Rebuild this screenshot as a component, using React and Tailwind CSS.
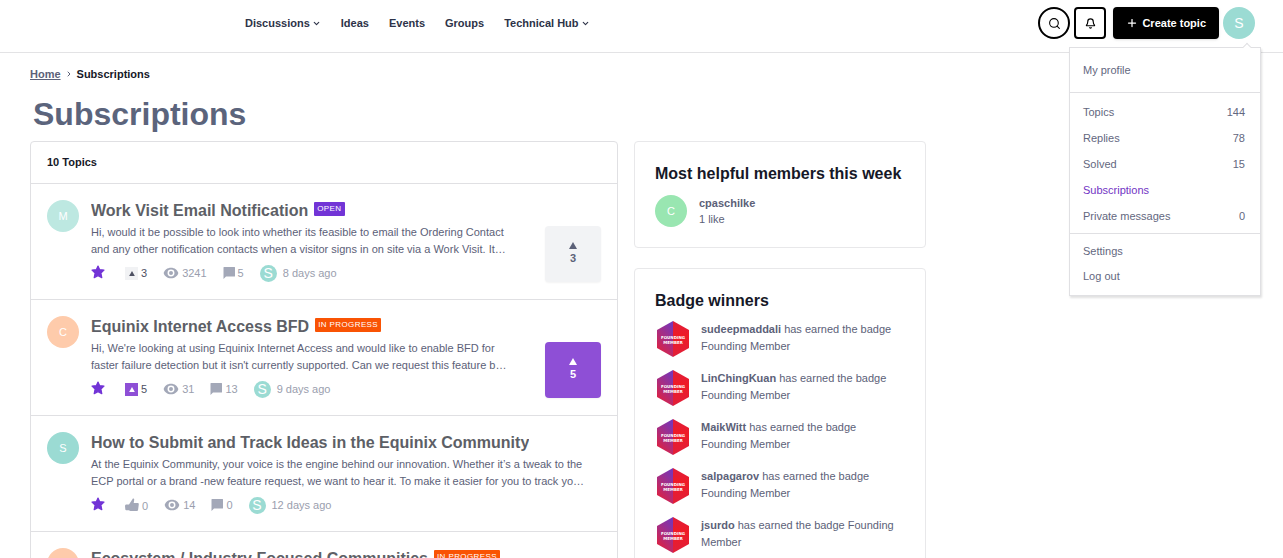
import { useState } from 'react';
import { ChevronDown, ChevronRight, Plus, Search, Bell } from 'lucide-react';

const navItems = [
  { label: 'Discussions', menu: true },
  { label: 'Ideas' },
  { label: 'Events' },
  { label: 'Groups' },
  { label: 'Technical Hub', menu: true },
];

const menuStats = [
  { label: 'Topics', count: 144 },
  { label: 'Replies', count: 78 },
  { label: 'Solved', count: 15 },
  { label: 'Subscriptions', active: true },
  { label: 'Private messages', count: 0 },
];

const topics = [
  {
    initial: 'M',
    avatar: 'bg-[#bde8e1]',
    title: 'Work Visit Email Notification',
    status: 'OPEN',
    statusColor: 'bg-[#7234d6]',
    lines: [
      'Hi, would it be possible to look into whether its feasible to email the Ordering Contact',
      'and any other notification contacts when a visitor signs in on site via a Work Visit. It…',
    ],
    votes: 3,
    views: 3241,
    replies: 5,
    age: '8 days ago',
  },
  {
    initial: 'C',
    avatar: 'bg-[#fecbab]',
    title: 'Equinix Internet Access BFD',
    status: 'IN PROGRESS',
    statusColor: 'bg-[#f95304]',
    lines: [
      "Hi, We're looking at using Equinix Internet Access and would like to enable BFD for",
      "faster failure detection but it isn't currently supported. Can we request this feature b…",
    ],
    votes: 5,
    voted: true,
    views: 31,
    replies: 13,
    age: '9 days ago',
  },
  {
    initial: 'S',
    avatar: 'bg-[#9bdbd3]',
    title: 'How to Submit and Track Ideas in the Equinix Community',
    lines: [
      'At the Equinix Community, your voice is the engine behind our innovation. Whether it’s a tweak to the',
      'ECP portal or a brand -new feature request, we want to hear it. To make it easier for you to track yo…',
    ],
    likes: 0,
    views: 14,
    replies: 0,
    age: '12 days ago',
  },
  {
    initial: 'C',
    avatar: 'bg-[#fecbab]',
    title: 'Ecosystem / Industry Focused Communities',
    status: 'IN PROGRESS',
    statusColor: 'bg-[#f95304]',
    lines: [],
  },
];

const winners = ['sudeepmaddali', 'LinChingKuan', 'MaikWitt', 'salpagarov', 'jsurdo'];

const Triangle = ({ className }) => (
  <svg viewBox="0 0 8 7" className={className} fill="currentColor" aria-hidden="true">
    <path d="M4 0l4 7H0z" />
  </svg>
);

const StarIcon = () => (
  <svg viewBox="0 0 14 14" className="size-3.5" fill="#7234d6" stroke="#7234d6" strokeWidth="1.2" strokeLinejoin="round" aria-hidden="true">
    <path d="M7 1l1.700 3.700 4.300.400-3.100 2.900.900 4.600L7 10.600l-3.800 2 .9-4.600L1 5.100l4.300-.4z" />
  </svg>
);

const EyeIcon = () => (
  <svg viewBox="0 0 24 24" className="h-4 w-4" fill="#a3a8b8" aria-hidden="true">
    <path d="M12 4C6.500 4 2.200 7.200 1 12c1.200 4.800 5.500 8 11 8s9.800-3.200 11-8c-1.200-4.800-5.500-8-11-8zm0 13.200a5.200 5.200 0 110-10.400 5.200 5.200 0 010 10.400zm0-2.200a3 3 0 100-6 3 3 0 000 6z" />
  </svg>
);

const CommentIcon = () => (
  <svg viewBox="0 0 12 12" className="size-3" fill="#a3a8b8" aria-hidden="true">
    <path d="M1 0h10.500a.5.5 0 01.5.500v8.500a.5.5 0 01-.5.500H3L.5 12V.5A.5.500 0 011 0z" />
  </svg>
);

const ThumbIcon = () => (
  <svg viewBox="0 0 14 14" className="size-3.5" fill="#a3a8b8" aria-hidden="true">
    <path d="M1.500 6.500H4L7.600.900C8 .2 9.300.500 9.200 1.700L8.700 5H12.500c.9 0 1.400.6 1.300 1.300l-.7 5.400c-.1.800-.7 1.300-1.500 1.300H5.500c-.6 0-1-.3-1.500-.7H1.500c-.6 0-1.100-.4-1.200-1L0 8c0-.9.600-1.500 1.500-1.500z" />
  </svg>
);

const FoundingBadge = () => (
  <svg viewBox="0 0 32 36" className="h-9 w-8 shrink-0 font-['DejaVu_Sans',sans-serif]" role="img" aria-label="Founding Member badge">
    <defs>
      <linearGradient id="badgeLeft" x1="0.7" y1="0" x2="0.2" y2="1">
        <stop offset="0" stopColor="#7a35b4" />
        <stop offset="0.45" stopColor="#a82d82" />
        <stop offset="1" stopColor="#e81f35" />
      </linearGradient>
      <linearGradient id="badgeRight" x1="0" y1="0" x2="0" y2="1">
        <stop offset="0" stopColor="#de1d3c" />
        <stop offset="0.4" stopColor="#ef1b26" />
        <stop offset="1" stopColor="#e01f3a" />
      </linearGradient>
    </defs>
    <path d="M16 0L0 9v18l16 9z" fill="url(#badgeLeft)" />
    <path d="M16 0l16 9v18l-16 9z" fill="url(#badgeRight)" />
    <text x="16" y="18" fill="#fff" fontSize="4" fontWeight="700" textAnchor="middle">FOUNDING</text>
    <text x="16" y="23" fill="#fff" fontSize="4" fontWeight="700" textAnchor="middle">MEMBER</text>
  </svg>
);

const Header = () => {
  const [open, setOpen] = useState(true);

  return (
    <header className="flex h-[53px] items-start justify-between border-b border-[#e3e3e5] pt-[7px] pr-7 pl-[245px]">
      <nav className="flex h-8 items-center gap-5 text-[11px] font-bold text-[#2d3348]">
        {navItems.map((item) =>
          item.menu ? (
            <button key={item.label} type="button" className="flex items-center gap-0.5 pt-px">
              {item.label}
              <ChevronDown className="size-[9px]" strokeWidth={3} />
            </button>
          ) : (
            <a key={item.label} href="#">{item.label}</a>
          )
        )}
      </nav>

      <div className="flex items-center gap-1">
        <button type="button" aria-label="Search" className="flex size-8 items-center justify-center rounded-full border-2 border-black">
          <Search className="size-[13px]" strokeWidth={2} />
        </button>
        <button type="button" aria-label="Notifications" className="flex size-8 items-center justify-center rounded border-2 border-black">
          <Bell className="size-[11px]" strokeWidth={2.5} />
        </button>
        <button type="button" className="ml-[3px] flex h-8 items-center gap-1 rounded bg-black px-[13px] text-[11px] font-bold text-white shadow-sm">
          <Plus className="size-3" strokeWidth={2.5} />
          Create topic
        </button>
        <div className="relative">
          <button
            type="button"
            aria-label="Account menu"
            onClick={() => setOpen(!open)}
            className="flex size-8 items-center justify-center rounded-full bg-[#9bdbd3] text-sm text-white"
          >
            S
          </button>
          {open && <AccountMenu />}
        </div>
      </div>
    </header>
  );
};

const AccountMenu = () => (
  <div className="absolute top-10 -right-1.5 z-10 w-48 border border-[#e0e0e3] bg-white text-[11px] leading-4 text-[#636780] shadow-[1px_2px_2px_rgba(0,0,0,0.12)]">
    <span className="absolute -top-1 right-2.5 size-1.5 rotate-45 border-t border-l border-[#e0e0e3] bg-white" />
    <a href="#" className="block border-b border-[#e0e0e3] px-[13px] py-3.5">My profile</a>
    <ul className="space-y-2.5 border-b border-[#e0e0e3] px-[13px] pt-[11px] pb-[9px]">
      {menuStats.map((item) => (
        <li key={item.label}>
          <a href="#" className={`flex justify-between pr-0.5 ${item.active ? 'text-[#7234c4]' : ''}`}>
            <span>{item.label}</span>
            <span>{item.count}</span>
          </a>
        </li>
      ))}
    </ul>
    <div className="space-y-[9px] px-[13px] pt-[9px] pb-[11px]">
      <a href="#" className="block">Settings</a>
      <a href="#" className="block">Log out</a>
    </div>
  </div>
);

const TopicMeta = ({ topic }) => (
  <div className="mt-1.5 flex h-[18px] items-center text-[11px] text-[#9a9eae]">
    <button type="button" aria-label="Unsubscribe" className="mr-5 pb-0.5">
      <StarIcon />
    </button>
    {topic.votes !== undefined ? (
      <span className="flex items-center gap-[3px] text-[#4d5062]">
        <span className={`flex size-[13px] items-center justify-center ${topic.voted ? 'bg-[#8e4fd6] text-white' : 'bg-[#f1f2f4] text-[#4d5062]'}`}>
          <Triangle className="h-[5px] w-1.5" />
        </span>
        {topic.votes}
      </span>
    ) : (
      <span className="flex items-center gap-[3px]">
        <ThumbIcon />
        <span className="pt-0.5">{topic.likes}</span>
      </span>
    )}
    <span className="ml-4 flex items-center gap-[3px]">
      <EyeIcon />
      {topic.views}
    </span>
    <span className="ml-4 flex items-center gap-[3px]">
      <CommentIcon />
      {topic.replies}
    </span>
    <span className="ml-4 flex size-[17px] items-center justify-center rounded-full bg-[#9bdbd3] text-sm text-white">S</span>
    <span className="ml-1.5">{topic.age}</span>
  </div>
);

const TopicRow = ({ topic }) => (
  <li className="flex min-h-[116px] gap-3 border-t border-[#e0e0e3] px-4 pt-4">
    <span className={`flex size-8 shrink-0 items-center justify-center rounded-full text-[11px] text-white ${topic.avatar}`}>
      {topic.initial}
    </span>
    <div className="min-w-0 flex-1">
      <div className="flex h-[22px] items-center gap-1.5">
        <h3 className="truncate text-base leading-5 font-bold text-[#5d5f66]">
          <a href="#">{topic.title}</a>
        </h3>
        {topic.status && (
          <span className={`mb-1 shrink-0 rounded-[1px] px-[3px] text-[8px] leading-[14px] tracking-wider text-white ${topic.statusColor}`}>
            {topic.status}
          </span>
        )}
      </div>
      <p className="mt-0.5 text-[11px] leading-[17px] text-[#5c6178]">
        {topic.lines.map((line) => (
          <span key={line} className="block whitespace-nowrap">{line}</span>
        ))}
      </p>
      {topic.age && <TopicMeta topic={topic} />}
    </div>
    {topic.votes !== undefined && (
      <button
        type="button"
        className={`mb-[17px] flex size-14 shrink-0 flex-col items-center justify-center gap-px self-end rounded-sm text-[11px] leading-4 font-bold shadow-xs ${topic.voted ? 'bg-[#8e4fd6] text-white' : 'bg-[#f2f3f5] text-[#5c6178]'}`}
      >
        <Triangle className="h-[7px] w-2" />
        {topic.votes}
      </button>
    )}
  </li>
);

const Sidebar = () => (
  <aside className="w-[292px] shrink-0 space-y-5 text-[11px] text-[#5c6178]">
    <section className="rounded border border-[#e8e8ea] p-5">
      <h2 className="text-base leading-6 font-bold whitespace-nowrap text-[#161827]">Most helpful members this week</h2>
      <div className="mt-[9px] flex items-center gap-3">
        <span className="flex size-8 items-center justify-center rounded-full bg-[#99e6b1] text-[11px] text-white">C</span>
        <div className="leading-4">
          <a href="#" className="block font-bold">cpaschilke</a>
          <p>1 like</p>
        </div>
      </div>
    </section>
    <section className="rounded border border-[#e8e8ea] p-5">
      <h2 className="text-base leading-6 font-bold text-[#161827]">Badge winners</h2>
      <ul className="mt-2 space-y-[13px] pl-0.5">
        {winners.map((name) => (
          <li key={name} className="flex items-center gap-3">
            <FoundingBadge />
            <p className="h-9 leading-[17px]">
              <a href="#" className="font-bold">{name}</a> has earned the badge Founding Member
            </p>
          </li>
        ))}
      </ul>
    </section>
  </aside>
);

const App = () => {
  return (
    <div className="overflow-x-hidden bg-white font-['Liberation_Sans',Arial,sans-serif]">
      <Header />
      <main className="px-[30px] pt-[13px]">
        <nav aria-label="Breadcrumb" className="flex items-center gap-1 text-[11px] leading-4 font-bold">
          <a href="#" className="text-[#5c6178] underline">Home</a>
          <ChevronRight className="size-2 text-[#5c6178]" strokeWidth={3} />
          <span className="text-[#161827]">Subscriptions</span>
        </nav>
        <h1 className="mt-3 pl-[3px] text-[32px] leading-10 font-bold text-[#5b647c]">Subscriptions</h1>
        <div className="mt-[7px] flex max-w-[896px] items-start gap-4">
          <section className="min-w-0 flex-1 rounded-t border border-[#e0e0e3]">
            <h2 className="px-4 text-[11px] leading-[41px] font-bold text-[#161827]">10 Topics</h2>
            <ul>
              {topics.map((topic) => (
                <TopicRow key={topic.title} topic={topic} />
              ))}
            </ul>
          </section>
          <Sidebar />
        </div>
      </main>
    </div>
  );
};

export default App;
